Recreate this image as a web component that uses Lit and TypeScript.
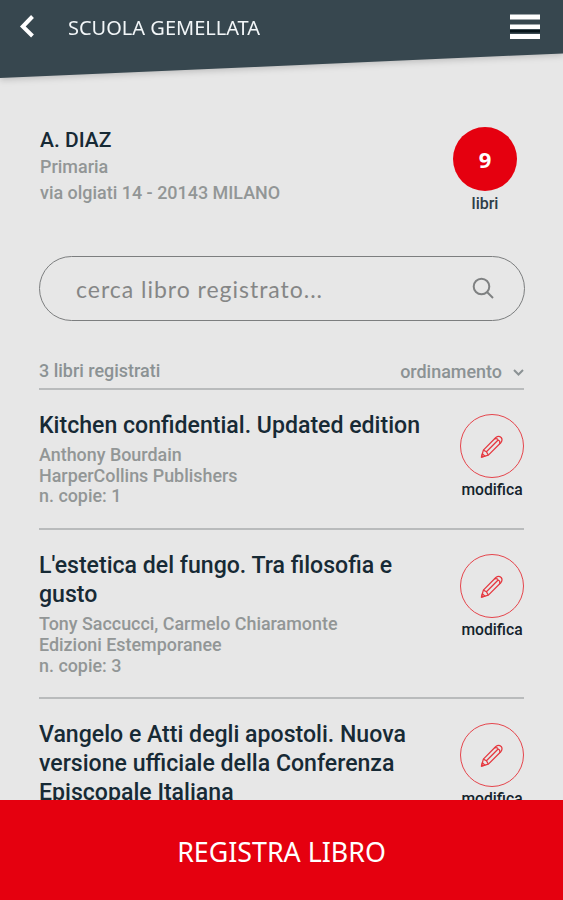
import { LitElement, html, css, svg } from "lit";
import { customElement, property } from "lit/decorators.js";

interface Book {
  title: string;
  author: string;
  publisher: string;
  copies: number;
}

const BOOKS: Book[] = [
  {
    title: "Kitchen confidential. Updated edition",
    author: "Anthony Bourdain",
    publisher: "HarperCollins Publishers",
    copies: 1,
  },
  {
    title: "L'estetica del fungo. Tra filosofia e gusto",
    author: "Tony Saccucci, Carmelo Chiaramonte",
    publisher: "Edizioni Estemporanee",
    copies: 3,
  },
];

const LAST_TITLE =
  "Vangelo e Atti degli apostoli. Nuova versione ufficiale della Conferenza Episcopale Italiana";

const pencil = svg`
  <path d="M1.500 24 L3.500 16.800 L16.500 3.600 Q19.500 1.400 22 3.600 Q23.900 6 21.900 8.800 L8.700 22 Z" />
  <path d="M3.500 16.800 L6.700 18.400 L8.700 22 M6.700 18.400 L18.900 6.200 M15.100 5 Q18.500 4.400 18.900 6.200 Q21.300 7 20.500 10.200" />
  <path d="M1.500 24 L2.500 20.600 L5.100 23 Z" />
`;

@customElement("book-row")
export class BookRow extends LitElement {
  @property({ attribute: false }) book!: Partial<Book>;

  static styles = css`
    :host {
      display: flex;
      justify-content: space-between;
      box-sizing: border-box;
      padding: 21px 0 21px;
      border-bottom: 2px solid #b9bbbc;
    }
    :host(:last-of-type) {
      border-bottom: 0;
      padding-bottom: 0;
    }
    .info {
      width: 400px;
    }
    .title {
      margin: 0 0 5px;
      font-size: 23.1px;
      line-height: 29px;
      font-weight: 500;
      color: #172a35;
    }
    .meta {
      font-size: 17.9px;
      line-height: 20.7px;
      font-weight: 500;
      color: #929696;
    }
    .edit {
      display: flex;
      flex-direction: column;
      align-items: center;
      width: 64px;
      height: 84px;
      margin-top: 3px;
    }
    .ring {
      display: grid;
      place-items: center;
      box-sizing: border-box;
      flex: none;
      width: 64px;
      height: 64px;
      border: 1.5px solid #e5454c;
      border-radius: 50%;
    }
    .pencil {
      width: 24px;
      height: 25px;
      fill: none;
      stroke: #e5383f;
      stroke-width: 1.3;
      stroke-linejoin: round;
    }
    .label {
      margin-top: 1px;
      font-size: 15.7px;
      line-height: 21px;
      font-weight: 500;
      color: #14232c;
      white-space: nowrap;
    }
  `;

  render() {
    const b = this.book;
    return html`
      <div class="info">
        <h2 class="title">${b.title}</h2>
        ${b.author
          ? html`
              <div class="meta">${b.author}</div>
              <div class="meta">${b.publisher}</div>
              <div class="meta">n. copie: ${b.copies}</div>
            `
          : null}
      </div>
      <div class="edit">
        <div class="ring"><svg class="pencil" viewBox="0 0 25 26">${pencil}</svg></div>
        <div class="label">modifica</div>
      </div>
    `;
  }
}

@customElement("app-root")
export class AppRoot extends LitElement {
  static styles = css`
    :host {
      display: flex;
      flex-direction: column;
      height: 900px;
      overflow: hidden;
      background: #e7e7e7;
      font-family: Roboto, "Liberation Sans", sans-serif;
    }
    .shade {
      flex: none;
      filter: drop-shadow(0 2px 3px rgba(0, 0, 0, 0.18));
    }
    .bar {
      display: flex;
      align-items: flex-start;
      box-sizing: border-box;
      height: 79px;
      padding: 14px 23px 0 19px;
      background: #37474f;
      clip-path: polygon(0 0, 100% 0, 100% 53.5px, 0 78px);
    }
    .back {
      width: 16px;
      height: 24px;
      fill: none;
      stroke: #fff;
      stroke-width: 4;
    }
    .heading {
      flex: 1;
      margin: 0 0 0 33px;
      font: 400 20px/28px "Noto Sans", sans-serif;
      color: #f2f6f8;
    }
    .menu {
      width: 30px;
      height: 26px;
    }
    .scroll {
      flex: 1;
      min-height: 0;
      overflow: hidden;
      padding: 48px 39px 0;
    }
    .school {
      display: flex;
      justify-content: space-between;
      padding: 0 7px 0 1px;
      height: 129px;
    }
    .name {
      margin: 0;
      font-size: 21px;
      line-height: 27px;
      font-weight: 500;
      color: #172a35;
    }
    .detail {
      font-size: 17.95px;
      line-height: 26px;
      font-weight: 500;
      color: #929696;
    }
    .count {
      display: flex;
      flex-direction: column;
      align-items: center;
      width: 64px;
    }
    .disc {
      display: grid;
      place-items: center;
      box-sizing: border-box;
      width: 64px;
      height: 64px;
      padding-bottom: 1px;
      border-radius: 50%;
      background: #e5000f;
      color: #fff;
      font: 700 22px/28px "Noto Sans", sans-serif;
    }
    .unit {
      margin-top: 2px;
      font-size: 16px;
      line-height: 21px;
      font-weight: 500;
      color: #2c3d48;
    }
    .search {
      display: flex;
      align-items: center;
      justify-content: space-between;
      box-sizing: border-box;
      width: 486px;
      height: 65px;
      padding: 1px 30px 0 36px;
      border: 1.5px solid #7c7e7f;
      border-radius: 33px;
      font: 400 23px/30px Lato, sans-serif;
      letter-spacing: 0.98px;
      color: #858686;
    }
    .glass {
      width: 22px;
      height: 22px;
      margin-top: -2px;
      fill: none;
      stroke: #7f8182;
      stroke-width: 2;
    }
    .tools {
      display: flex;
      align-items: flex-end;
      justify-content: space-between;
      box-sizing: border-box;
      height: 69px;
      padding-bottom: 4px;
      border-bottom: 2px solid #b9bbbc;
      font-size: 17.95px;
      line-height: 24px;
      font-weight: 500;
      color: #8b9294;
    }
    .total {
      padding-bottom: 1px;
    }
    .sort {
      display: flex;
      align-items: center;
      gap: 11px;
    }
    .chevron {
      width: 11px;
      height: 7px;
      fill: none;
      stroke: #8b9294;
      stroke-width: 2;
    }
    .cta {
      flex: none;
      display: grid;
      place-items: center;
      box-sizing: border-box;
      height: 100px;
      padding: 4px 0 0;
      border: 0;
      background: #e5000f;
      color: #fff;
      font: 400 26.8px/36px "Noto Sans", sans-serif;
    }
  `;

  render() {
    return html`
      <header class="shade">
        <div class="bar">
          <svg class="back" viewBox="0 0 16 24"><path d="M13.5 2.5 L3.8 12.5 L13.5 22" /></svg>
          <h1 class="heading">SCUOLA GEMELLATA</h1>
          <svg class="menu" viewBox="0 0 30 26">
            <path fill="#fff" d="M0 .5h30v5h-30z M0 10.5h30v4.500h-30z M0 20h30v5h-30z" />
            <path fill="#07151b" d="M0 16h30v2.500h-30z" />
          </svg>
        </div>
      </header>
      <main class="scroll">
        <section class="school">
          <div>
            <h2 class="name">A. DIAZ</h2>
            <div class="detail">Primaria</div>
            <div class="detail">via olgiati 14 - 20143 MILANO</div>
          </div>
          <div class="count">
            <div class="disc">9</div>
            <div class="unit">libri</div>
          </div>
        </section>
        <div class="search">
          <span>cerca libro registrato...</span>
          <svg class="glass" viewBox="0 0 22 22">
            <circle cx="9.500" cy="9.500" r="7.800" />
            <path d="M15 15 L21 21" />
          </svg>
        </div>
        <div class="tools">
          <span class="total">3 libri registrati</span>
          <span class="sort">ordinamento
            <svg class="chevron" viewBox="0 0 11 7"><path d="M1 1 L5.500 5.500 L10 1" /></svg>
          </span>
        </div>
        ${BOOKS.map((b) => html`<book-row .book=${b}></book-row>`)}
        <book-row .book=${{ title: LAST_TITLE }}></book-row>
      </main>
      <button class="cta">REGISTRA LIBRO</button>
    `;
  }
}
